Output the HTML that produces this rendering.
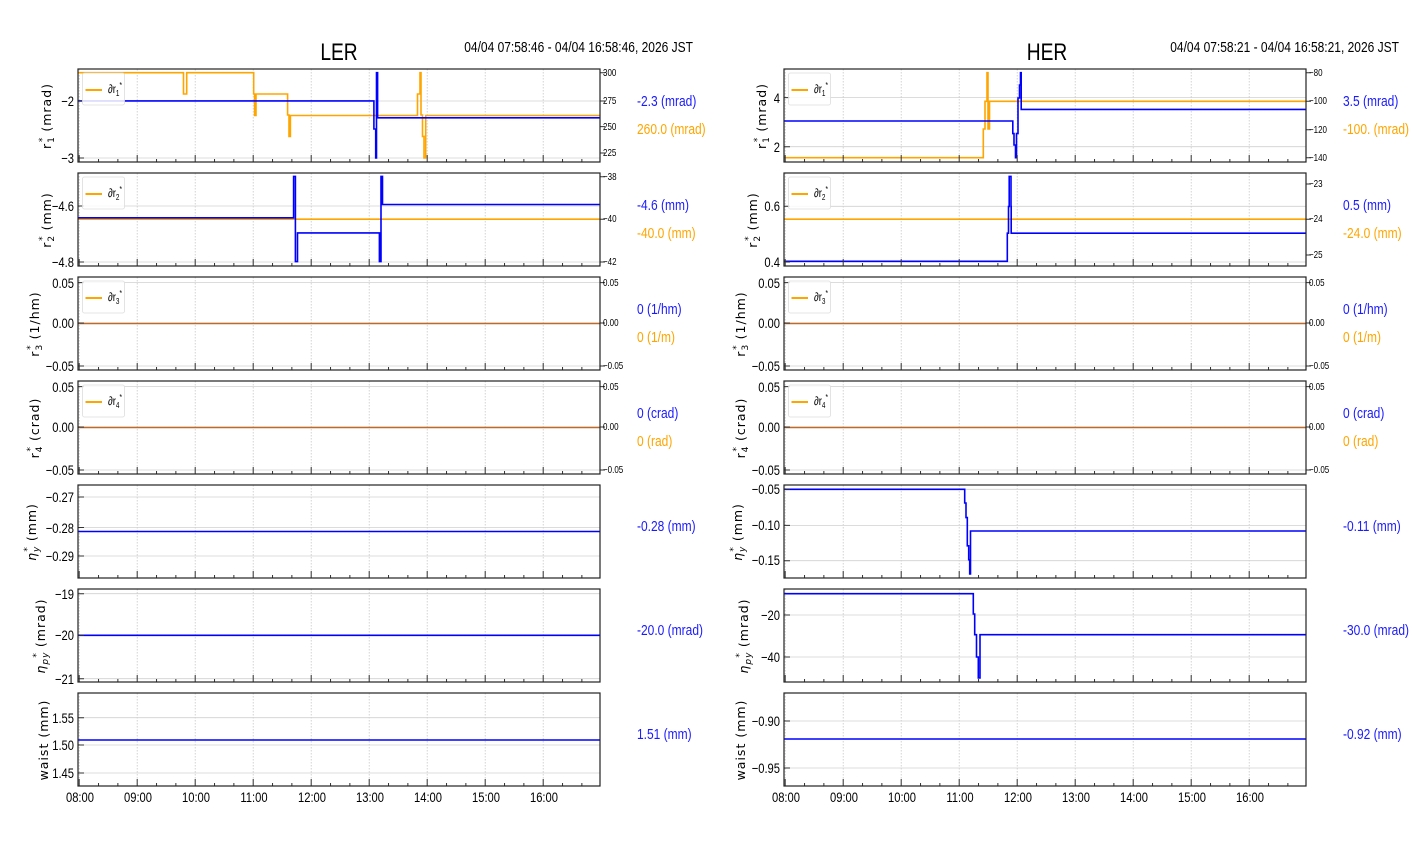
<!DOCTYPE html>
<html><head><meta charset="utf-8"><style>
html,body{margin:0;padding:0;background:#fff;width:1412px;height:864px;overflow:hidden}
svg{display:block}
.t{font-family:"Liberation Sans",sans-serif;font-size:12px;fill:#000}
.t text,text.t,text.ti{transform-box:fill-box;transform-origin:left center;transform:scaleX(.8)}
.e text,text.e{transform-origin:right center}
.m text,text.m{transform-origin:center center}
.s{font-size:9px}
.yl{font-family:"DejaVu Sans","Liberation Sans",sans-serif;font-size:12.5px;letter-spacing:1px;fill:#000}
.b{fill:#1a1aff;font-size:15px}
.o{fill:#ffa500;font-size:15px}
.ti{font-family:"Liberation Sans",sans-serif;font-size:24px}
.bl{fill:none;stroke:#0000ff;stroke-width:1.6}
.ol{fill:none;stroke:#ffa500;stroke-width:1.6}
</style></head><body>
<svg id="s" width="1412" height="864" xmlns="http://www.w3.org/2000/svg">
<g id="grid"></g>
<path class="ol" d="M78,72.7H183.5V94H186.7V72.7H253.7V94H254.6V115.5H256V94H287.6V115H289V136.4H290.4V115.5H417.5V94H420V72.7H421V115H422.5V136.4H424V158H425.7V115.5H600"/>
<path class="bl" d="M78,100.9H373.9V129H375.7V158H376.5V72.7H377.6V117.8H600"/>
<path class="ol" d="M78,219.2H600"/>
<path class="bl" d="M78,217.8H293.6V176.4H295.4V261.6H297.5V232.9H379.4V261.6H381V176.4H382.5V204.5H600"/>
<path d="M78,323.5H600M78,427.5H600" stroke="#c06a2a" stroke-width="1.6"/>
<path class="bl" d="M78,531.5H600"/>
<path class="bl" d="M78,635.3H600"/>
<path class="bl" d="M78,740H600"/>
<path class="ol" d="M784,157.7H983.3V129H985V101.3H987V72.7H988V129H989.5V101.3H1306"/>
<path class="bl" d="M784,121H1012.8V133.6H1014V145H1015.5V157.7H1016.5V133.6H1018V98H1019.5V85H1020.5V72.7H1021.2V109.4H1306"/>
<path class="ol" d="M784,219.2H1306"/>
<path class="bl" d="M784,261.3H1007.3V233.2H1008.5V206.5H1009.2V176.4H1011V206.5H1011.2V233.2H1306"/>
<path d="M784,323.5H1306M784,427.5H1306" stroke="#c06a2a" stroke-width="1.6"/>
<path class="bl" d="M784,489.3H964.7V503H966V517.6H967.3V545.8H968.7V559.7H969.7V574H970.5V531H1306"/>
<path class="bl" d="M784,593.7H973.3V614H974.7V634.7H976.5V657H978.3V678H980V634.7H1306"/>
<path class="bl" d="M784,739H1306"/>
<g id="frames"></g>
<g id="leg"></g>
<g class="t" style="font-size:12px">
<text x="108" y="93">∂r<tspan style="font-size:8px" dy="3">1</tspan><tspan style="font-size:8px" dy="-8">*</tspan></text>
<text x="108" y="197">∂r<tspan style="font-size:8px" dy="3">2</tspan><tspan style="font-size:8px" dy="-8">*</tspan></text>
<text x="108" y="301">∂r<tspan style="font-size:8px" dy="3">3</tspan><tspan style="font-size:8px" dy="-8">*</tspan></text>
<text x="108" y="405">∂r<tspan style="font-size:8px" dy="3">4</tspan><tspan style="font-size:8px" dy="-8">*</tspan></text>
<text x="814" y="93">∂r<tspan style="font-size:8px" dy="3">1</tspan><tspan style="font-size:8px" dy="-8">*</tspan></text>
<text x="814" y="197">∂r<tspan style="font-size:8px" dy="3">2</tspan><tspan style="font-size:8px" dy="-8">*</tspan></text>
<text x="814" y="301">∂r<tspan style="font-size:8px" dy="3">3</tspan><tspan style="font-size:8px" dy="-8">*</tspan></text>
<text x="814" y="405">∂r<tspan style="font-size:8px" dy="3">4</tspan><tspan style="font-size:8px" dy="-8">*</tspan></text>
</g>
<text class="ti m" x="339" y="60" text-anchor="middle">LER</text>
<text class="ti m" x="1047" y="60" text-anchor="middle">HER</text>
<g class="t e" style="font-size:15px">
<text x="693" y="52" text-anchor="end">04/04 07:58:46 - 04/04 16:58:46, 2026 JST</text>
<text x="1399" y="52" text-anchor="end">04/04 07:58:21 - 04/04 16:58:21, 2026 JST</text>
</g>
<g class="t e" text-anchor="end" style="font-size:14px">
<text x="74" y="106">−2</text><text x="74" y="163">−3</text>
<text x="74" y="211">−4.6</text><text x="74" y="267">−4.8</text>
<text x="74" y="288">0.05</text><text x="74" y="328">0.00</text><text x="74" y="371">−0.05</text>
<text x="74" y="392">0.05</text><text x="74" y="432">0.00</text><text x="74" y="475">−0.05</text>
<text x="74" y="502">−0.27</text><text x="74" y="533">−0.28</text><text x="74" y="561">−0.29</text>
<text x="74" y="599">−19</text><text x="74" y="640">−20</text><text x="74" y="684">−21</text>
<text x="74" y="723">1.55</text><text x="74" y="750">1.50</text><text x="74" y="778">1.45</text>
<text x="780" y="103">4</text><text x="780" y="152">2</text>
<text x="780" y="211">0.6</text><text x="780" y="267">0.4</text>
<text x="780" y="288">0.05</text><text x="780" y="328">0.00</text><text x="780" y="371">−0.05</text>
<text x="780" y="392">0.05</text><text x="780" y="432">0.00</text><text x="780" y="475">−0.05</text>
<text x="780" y="494">−0.05</text><text x="780" y="530">−0.10</text><text x="780" y="565">−0.15</text>
<text x="780" y="620">−20</text><text x="780" y="662">−40</text>
<text x="780" y="726">−0.90</text><text x="780" y="773">−0.95</text>
</g>
<g class="t" style="font-size:10px">
<text x="603" y="76">300</text><text x="603" y="104">275</text><text x="603" y="130">250</text><text x="603" y="156">225</text>
<text x="603" y="180">−38</text><text x="603" y="222">−40</text><text x="603" y="265">−42</text>
<text x="603" y="286">0.05</text><text x="603" y="326">0.00</text><text x="603" y="369">−0.05</text>
<text x="603" y="390">0.05</text><text x="603" y="430">0.00</text><text x="603" y="473">−0.05</text>
<text x="1309" y="76">−80</text><text x="1309" y="104">−100</text><text x="1309" y="133">−120</text><text x="1309" y="161">−140</text>
<text x="1309" y="187">−23</text><text x="1309" y="222">−24</text><text x="1309" y="258">−25</text>
<text x="1309" y="286">0.05</text><text x="1309" y="326">0.00</text><text x="1309" y="369">−0.05</text>
<text x="1309" y="390">0.05</text><text x="1309" y="430">0.00</text><text x="1309" y="473">−0.05</text>
</g>
<g class="t m" text-anchor="middle" style="font-size:14px">
<text x="80" y="802">08:00</text><text x="138" y="802">09:00</text><text x="196" y="802">10:00</text><text x="254" y="802">11:00</text><text x="312" y="802">12:00</text><text x="370" y="802">13:00</text><text x="428" y="802">14:00</text><text x="486" y="802">15:00</text><text x="544" y="802">16:00</text>
<text x="786" y="802">08:00</text><text x="844" y="802">09:00</text><text x="902" y="802">10:00</text><text x="960" y="802">11:00</text><text x="1018" y="802">12:00</text><text x="1076" y="802">13:00</text><text x="1134" y="802">14:00</text><text x="1192" y="802">15:00</text><text x="1250" y="802">16:00</text>
</g>
<g class="t">
<text class="b" x="637" y="106">-2.3 (mrad)</text><text class="o" x="637" y="134">260.0 (mrad)</text>
<text class="b" x="637" y="210">-4.6 (mm)</text><text class="o" x="637" y="238">-40.0 (mm)</text>
<text class="b" x="637" y="314">0 (1/hm)</text><text class="o" x="637" y="342">0 (1/m)</text>
<text class="b" x="637" y="418">0 (crad)</text><text class="o" x="637" y="446">0 (rad)</text>
<text class="b" x="637" y="531">-0.28 (mm)</text>
<text class="b" x="637" y="635">-20.0 (mrad)</text>
<text class="b" x="637" y="739">1.51 (mm)</text>
<text class="b" x="1343" y="106">3.5 (mrad)</text><text class="o" x="1343" y="134">-100. (mrad)</text>
<text class="b" x="1343" y="210">0.5 (mm)</text><text class="o" x="1343" y="238">-24.0 (mm)</text>
<text class="b" x="1343" y="314">0 (1/hm)</text><text class="o" x="1343" y="342">0 (1/m)</text>
<text class="b" x="1343" y="418">0 (crad)</text><text class="o" x="1343" y="446">0 (rad)</text>
<text class="b" x="1343" y="531">-0.11 (mm)</text>
<text class="b" x="1343" y="635">-30.0 (mrad)</text>
<text class="b" x="1343" y="739">-0.92 (mm)</text>
</g>
<g class="yl" text-anchor="middle">
<text transform="translate(51,116) rotate(-90)">r<tspan font-size="9" dy="3">1</tspan><tspan font-size="9" dx="-6" dy="-9">*</tspan><tspan dy="6"> (mrad)</tspan></text>
<text transform="translate(51,220) rotate(-90)">r<tspan font-size="9" dy="3">2</tspan><tspan font-size="9" dx="-6" dy="-9">*</tspan><tspan dy="6"> (mm)</tspan></text>
<text transform="translate(39,324) rotate(-90)">r<tspan font-size="9" dy="3">3</tspan><tspan font-size="9" dx="-6" dy="-9">*</tspan><tspan dy="6"> (1/hm)</tspan></text>
<text transform="translate(39,428) rotate(-90)">r<tspan font-size="9" dy="3">4</tspan><tspan font-size="9" dx="-6" dy="-9">*</tspan><tspan dy="6"> (crad)</tspan></text>
<text transform="translate(36,532) rotate(-90)"><tspan font-style="italic">η</tspan><tspan font-size="9" dy="3" font-style="italic">y</tspan><tspan font-size="9" dx="-6" dy="-9">*</tspan><tspan dy="6"> (mm)</tspan></text>
<text transform="translate(45,636) rotate(-90)"><tspan font-style="italic">η</tspan><tspan font-size="9" dy="3" font-style="italic">py</tspan><tspan font-size="9" dx="-6" dy="-9">*</tspan><tspan dy="6"> (mrad)</tspan></text>
<text transform="translate(48,740) rotate(-90)">waist (mm)</text>
<text transform="translate(766,116) rotate(-90)">r<tspan font-size="9" dy="3">1</tspan><tspan font-size="9" dx="-6" dy="-9">*</tspan><tspan dy="6"> (mrad)</tspan></text>
<text transform="translate(757,220) rotate(-90)">r<tspan font-size="9" dy="3">2</tspan><tspan font-size="9" dx="-6" dy="-9">*</tspan><tspan dy="6"> (mm)</tspan></text>
<text transform="translate(745,324) rotate(-90)">r<tspan font-size="9" dy="3">3</tspan><tspan font-size="9" dx="-6" dy="-9">*</tspan><tspan dy="6"> (1/hm)</tspan></text>
<text transform="translate(745,428) rotate(-90)">r<tspan font-size="9" dy="3">4</tspan><tspan font-size="9" dx="-6" dy="-9">*</tspan><tspan dy="6"> (crad)</tspan></text>
<text transform="translate(742,532) rotate(-90)"><tspan font-style="italic">η</tspan><tspan font-size="9" dy="3" font-style="italic">y</tspan><tspan font-size="9" dx="-6" dy="-9">*</tspan><tspan dy="6"> (mm)</tspan></text>
<text transform="translate(748,636) rotate(-90)"><tspan font-style="italic">η</tspan><tspan font-size="9" dy="3" font-style="italic">py</tspan><tspan font-size="9" dx="-6" dy="-9">*</tspan><tspan dy="6"> (mrad)</tspan></text>
<text transform="translate(745,740) rotate(-90)">waist (mm)</text>
</g>
</svg>
<script>
(function(){
var NS="http://www.w3.org/2000/svg";
var grid=document.getElementById("grid"),fr=document.getElementById("frames"),lg=document.getElementById("leg");
function el(p,tag,a){var e=document.createElementNS(NS,tag);for(var k in a)e.setAttribute(k,a[k]);p.appendChild(e);return e;}
var tops=[69,173,277,381,485,589,693],H=93,W=522;
var yl={L:[[101,158],[206,262],[282.6,323,366],[386.6,427,470],[497,527.5,556],[593.7,635.3,678.7],[717.7,745,773]],
R:[[97.6,146.7],[206.3,262],[282.6,323,366],[386.6,427,470],[489.3,525.4,560.7],[615,657],[721,768]]};
var yr={L:[[72.7,101,126.6,153],[176.7,219.2,262],[282.6,323,366],[386.6,427,470]],
R:[[72.7,101.3,129.7,157.7],[184,219.2,255],[282.6,323,366],[386.6,427,470]]};
[["L",78],["R",784]].forEach(function(sd){
 var s=sd[0],ox=sd[1];
 tops.forEach(function(t,i){
  for(var h=0;h<9;h++){var x=ox+1.2+58*h;
   el(grid,"line",{x1:x,x2:x,y1:t,y2:t+H,stroke:"#c8c8c8","stroke-width":0.8,"stroke-dasharray":"1.5,1.5"});}
  var d="";
  for(var m=0;m<27;m++){var x=ox+1.2+58*m/3;if(x>ox+W)break;var L=(m%3==0)?7:3;d+="M"+x+","+(t+H)+"v-"+L;}
  yl[s][i].forEach(function(y){
   el(grid,"line",{x1:ox,x2:ox+W,y1:y,y2:y,stroke:"#d0d0d0","stroke-width":0.8});
   d+="M"+ox+","+y+"h6";});
  if(i<4){yr[s][i].forEach(function(y){d+="M"+(ox+W)+","+y+"h5";});}
  el(fr,"path",{d:d,stroke:"#333","stroke-width":1,fill:"none"});
  el(fr,"rect",{x:ox,y:t,width:W,height:H,fill:"none",stroke:"#222","stroke-width":1.2});
  if(i<4){
   el(lg,"rect",{x:ox+4.5,y:t+4,width:42,height:32,rx:2,fill:"#fff","fill-opacity":0.85,stroke:"#ddd","stroke-width":0.8});
   el(lg,"line",{x1:ox+7.5,x2:ox+24,y1:t+21,y2:t+21,stroke:"#ffa500","stroke-width":2});
  }
 });
});
})();
</script>
</body></html>
